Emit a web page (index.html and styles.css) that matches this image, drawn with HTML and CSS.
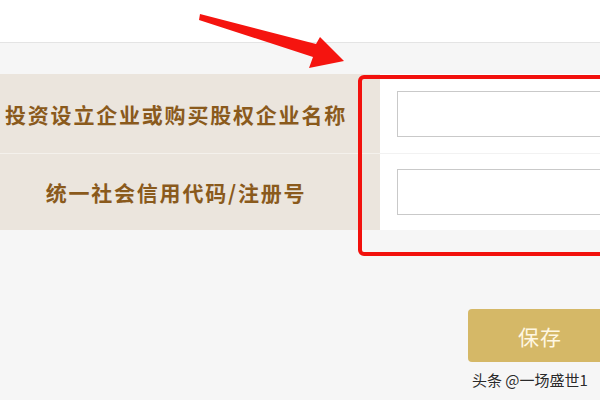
FILE: index.html
```html
<!DOCTYPE html>
<html lang="zh">
<head>
<meta charset="utf-8">
<link rel="stylesheet" href="styles.css">
</head>
<body>
<div class="page">
  <div class="header"></div>
  <div class="content">
    <div class="form">
      <div class="label">投资设立企业或购买股权企业名称</div>
      <div class="field"><div class="input"></div></div>
      <div class="label row2">统一社会信用代码/注册号</div>
      <div class="field row2"><div class="input"></div></div>
    </div>
    <div class="actions"><div class="btn">保存</div></div>
  </div>
  <div class="highlight"></div>
  <svg class="arrow" width="600" height="80" viewBox="0 0 600 80">
    <polygon points="200,14 316,44 320,37 344,61 309,68 313,57 199,20" fill="#f5140f"/>
  </svg>
  <div class="watermark">头条 @一场盛世1</div>
</div>
</body>
</html>
```
FILE: styles.css
```css
html, body {
  margin: 0;
  padding: 0;
}
body {
  background: #f6f6f6;
  font-family: "Noto Sans CJK SC", "Noto Sans", sans-serif;
  width: 600px;
  height: 400px;
  overflow: hidden;
}
.page {
  position: relative;
  width: 600px;
  height: 400px;
  overflow: hidden;
}
.header {
  height: 42px;
  background: #ffffff;
  border-bottom: 1px solid #e4e4e4;
}
.content {
  padding-top: 31px;
}
.form {
  display: grid;
  grid-template-columns: 380px 240px;
  grid-template-rows: 79px 77px;
}
.label {
  background: #ebe5dd;
  color: #8a5a1c;
  font-weight: bold;
  font-size: 21px;
  letter-spacing: 1.8px;
  display: flex;
  align-items: center;
  justify-content: center;
  padding-right: 28px;
  white-space: nowrap;
}
.field {
  background: #ffffff;
  display: flex;
  align-items: center;
  padding-left: 17px;
}
.row2 {
  border-top: 1px solid #f4f1ec;
}
.field.row2 {
  border-top-color: #f2f2f2;
}
.input {
  width: 240px;
  height: 44px;
  border: 1px solid #c9c9c9;
  background: #ffffff;
}
.actions {
  padding-top: 79px;
  padding-left: 468px;
}
.btn {
  width: 144px;
  height: 53px;
  background: #d5b867;
  border-radius: 4px;
  color: #fff7e2;
  font-size: 21px;
  display: flex;
  align-items: center;
  justify-content: center;
  letter-spacing: 1px;
}
.highlight {
  position: absolute;
  left: 358px;
  top: 75px;
  width: 300px;
  height: 173px;
  border: 4.5px solid #f2110d;
  border-radius: 6px;
}
.arrow {
  position: absolute;
  left: 0;
  top: 0;
}
.watermark {
  position: absolute;
  left: 472px;
  top: 369px;
  font-size: 15px;
  color: #2a2a2a;
  white-space: nowrap;
  text-shadow: 0 0 2px #ffffff;
}
```
